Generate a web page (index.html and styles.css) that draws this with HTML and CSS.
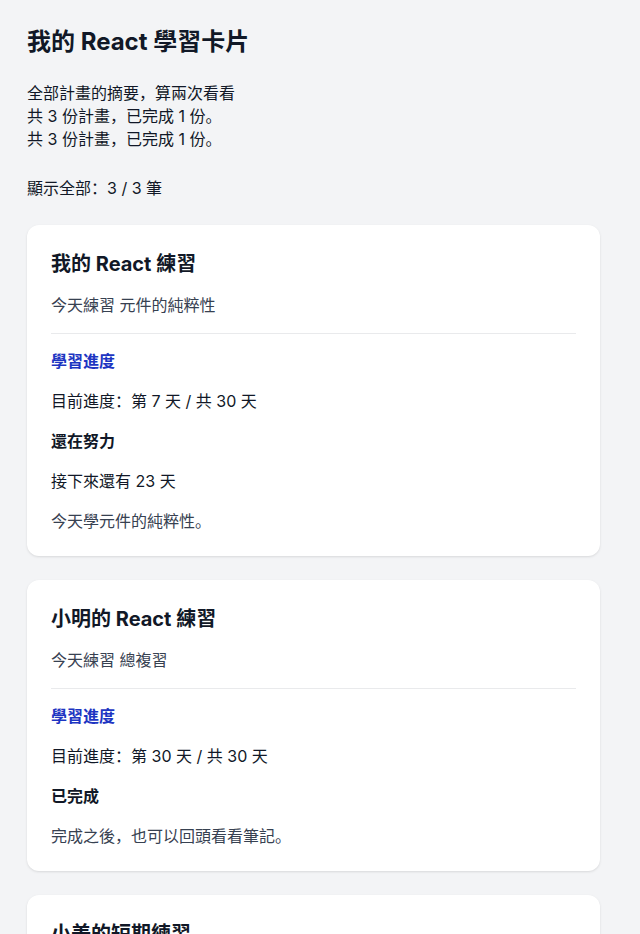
FILE: index.html
```html
<!DOCTYPE html>
<html lang="zh">
<head>
<meta charset="utf-8">
<title>我的 React 學習卡片</title>
<link rel="stylesheet" href="styles.css">
</head>
<body>
<main class="page">
  <h1 class="page-title">我的 React 學習卡片</h1>
  <div class="summary">
    <p>全部計畫的摘要，算兩次看看</p>
    <p>共 3 份計畫，已完成 1 份。</p>
    <p>共 3 份計畫，已完成 1 份。</p>
  </div>
  <p class="filter">顯示全部：3 / 3 筆</p>

  <section class="card">
    <h2 class="card-title">我的 React 練習</h2>
    <p class="card-sub">今天練習 元件的純粹性</p>
    <hr class="divider">
    <div class="card-body">
      <h3 class="section-label">學習進度</h3>
      <p>目前進度：第 7 天 / 共 30 天</p>
      <h4 class="status">還在努力</h4>
      <p>接下來還有 23 天</p>
      <p class="note">今天學元件的純粹性。</p>
    </div>
  </section>

  <section class="card">
    <h2 class="card-title">小明的 React 練習</h2>
    <p class="card-sub">今天練習 總複習</p>
    <hr class="divider">
    <div class="card-body">
      <h3 class="section-label">學習進度</h3>
      <p>目前進度：第 30 天 / 共 30 天</p>
      <h4 class="status">已完成</h4>
      <p class="note">完成之後，也可以回頭看看筆記。</p>
    </div>
  </section>

  <section class="card">
    <h2 class="card-title">小美的短期練習</h2>
    <p class="card-sub">今天練習 狀態管理</p>
    <hr class="divider">
    <div class="card-body">
      <h3 class="section-label">學習進度</h3>
      <p>目前進度：第 3 天 / 共 10 天</p>
    </div>
  </section>
</main>
</body>
</html>
```

FILE: styles.css
```css
* { box-sizing: border-box; }

html, body {
  margin: 0;
  padding: 0;
  background: #f3f4f6;
}

body {
  font-family: Inter, "Noto Sans CJK SC", sans-serif;
  color: #111827;
  font-size: 16px;
}

.page {
  padding: 26px 40px 40px 27px;
  display: flex;
  flex-direction: column;
}

.page-title {
  margin: 0;
  font-size: 24px;
  line-height: 32px;
  font-weight: 700;
}

.summary {
  margin-top: 24px;
}

.summary p {
  margin: 0;
  font-size: 16px;
  line-height: 23px;
}

.filter {
  margin: 26px 0 1px;
  font-size: 16px;
  line-height: 23px;
}

.card {
  margin-top: 24px;
  background: #ffffff;
  border-radius: 12px;
  box-shadow: 0 1px 3px rgba(0, 0, 0, 0.08), 0 1px 2px rgba(0, 0, 0, 0.04);
  padding: 25px 24px 23px;
}

.card-title {
  margin: 0;
  font-size: 20px;
  line-height: 28px;
  font-weight: 700;
}

.card-sub {
  margin: 15px 0 0;
  font-size: 16px;
  line-height: 24px;
  color: #374151;
}

.divider {
  border: 0;
  border-top: 1px solid #e9eaec;
  margin: 16px 0 15px;
}

.card-body {
  display: flex;
  flex-direction: column;
  gap: 16px;
}

.card-body p,
.card-body h3,
.card-body h4 {
  margin: 0;
  font-size: 16px;
  line-height: 24px;
}

.section-label {
  color: #1d35c2;
  font-weight: 700;
}

.status {
  font-weight: 700;
}

.note {
  color: #374151;
}
```
